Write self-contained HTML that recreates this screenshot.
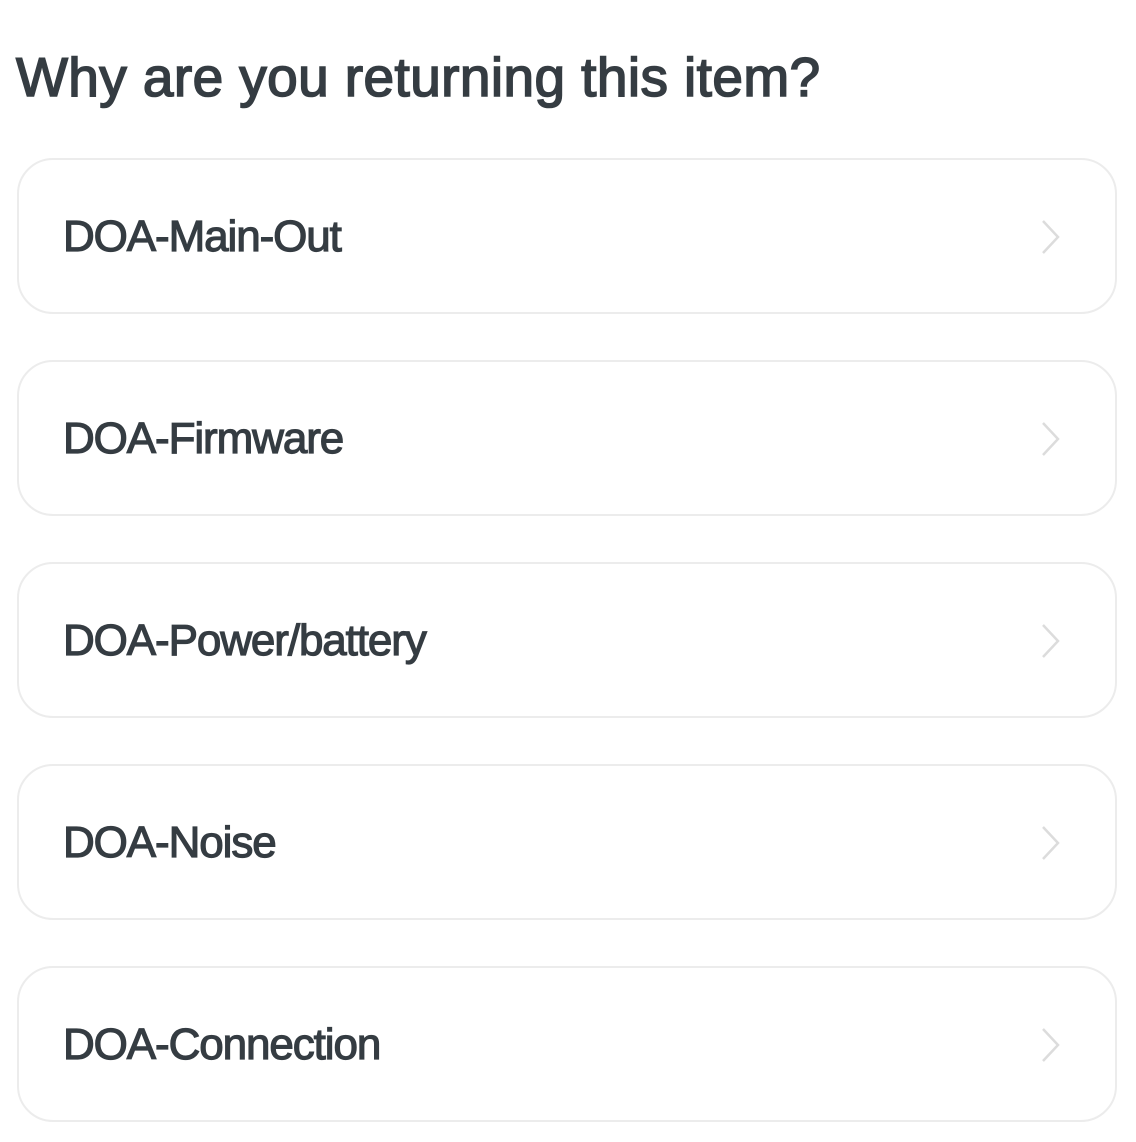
<!DOCTYPE html>
<html><head><style>
html,body{margin:0;padding:0;background:#fff;width:1136px;height:1142px;overflow:hidden}
body{font-family:"Liberation Sans",Arial,sans-serif;color:#353c42;position:relative}
h1{position:absolute;left:16px;top:45px;margin:0;font-size:55px;font-weight:normal;letter-spacing:0.4px;-webkit-text-stroke:1.6px #353c42;white-space:nowrap}
.card{position:absolute;left:17px;width:1096px;height:152px;border:2px solid #ececec;border-radius:36px;box-sizing:content-box}
.card span{position:absolute;left:44px;top:52px;font-size:44px;letter-spacing:-1.1px;-webkit-text-stroke:1.2px #353c42;white-space:nowrap}
.card svg{position:absolute;left:1020px;top:57px}
</style></head><body>
<h1>Why are you returning this item?</h1>
<div class="card" style="top:158px"><span>DOA-Main-Out</span><svg width="24" height="40" viewBox="0 0 24 40"><path d="M4 4 L19 20 L4 36" fill="none" stroke="#dcdcdc" stroke-width="2.5"/></svg></div>
<div class="card" style="top:360px"><span>DOA-Firmware</span><svg width="24" height="40" viewBox="0 0 24 40"><path d="M4 4 L19 20 L4 36" fill="none" stroke="#dcdcdc" stroke-width="2.5"/></svg></div>
<div class="card" style="top:562px"><span>DOA-Power/battery</span><svg width="24" height="40" viewBox="0 0 24 40"><path d="M4 4 L19 20 L4 36" fill="none" stroke="#dcdcdc" stroke-width="2.5"/></svg></div>
<div class="card" style="top:764px"><span>DOA-Noise</span><svg width="24" height="40" viewBox="0 0 24 40"><path d="M4 4 L19 20 L4 36" fill="none" stroke="#dcdcdc" stroke-width="2.5"/></svg></div>
<div class="card" style="top:966px"><span>DOA-Connection</span><svg width="24" height="40" viewBox="0 0 24 40"><path d="M4 4 L19 20 L4 36" fill="none" stroke="#dcdcdc" stroke-width="2.5"/></svg></div>
</body></html>
